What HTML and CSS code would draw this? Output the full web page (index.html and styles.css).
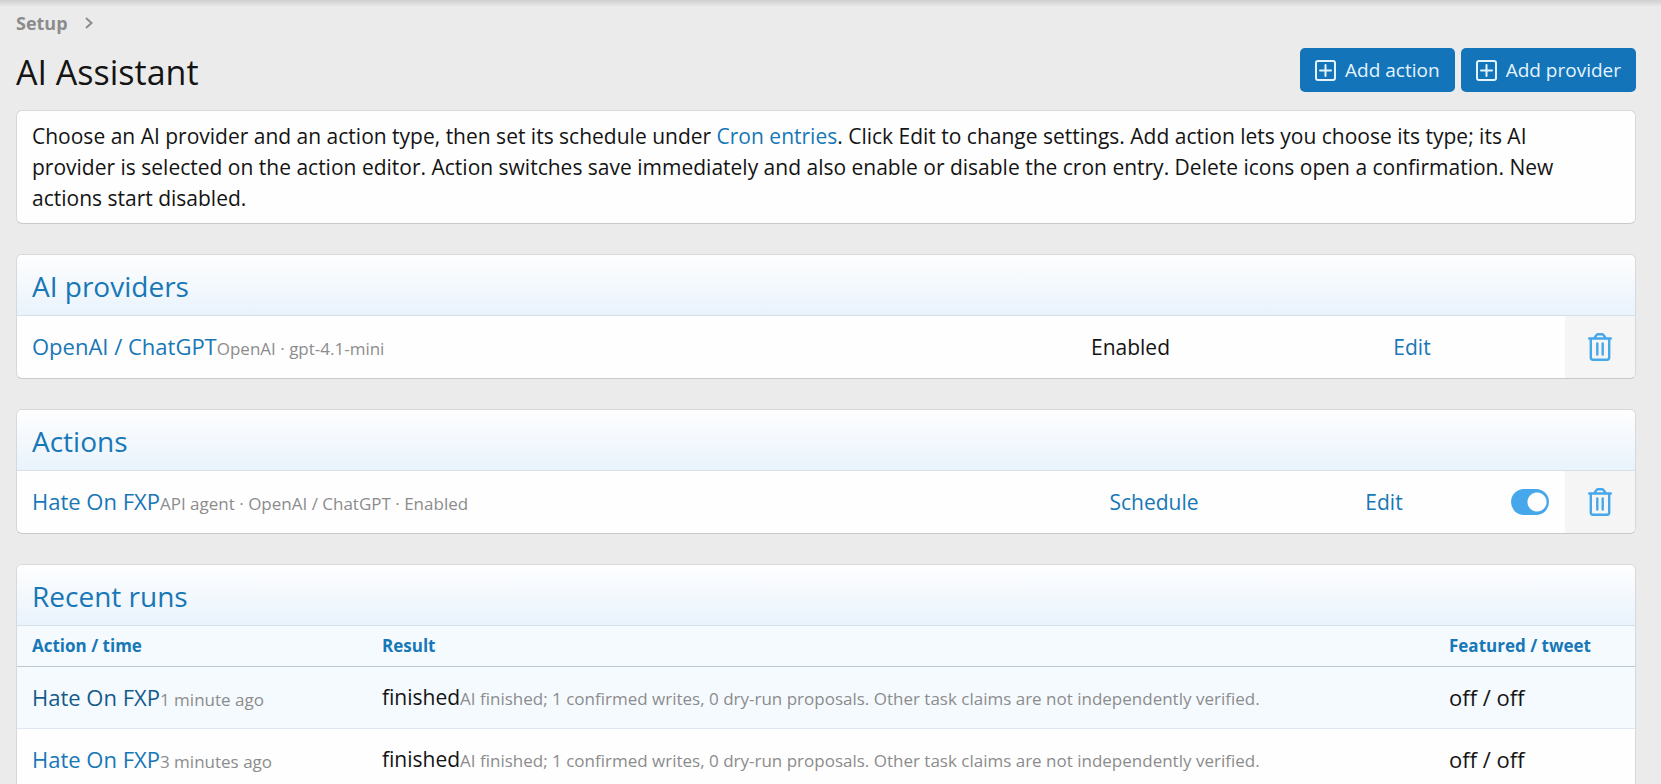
FILE: index.html
```
<!DOCTYPE html>
<html lang="en">
<head>
  <meta charset="UTF-8" />
  <meta name="viewport" content="width=device-width, initial-scale=1" />
  <title>AI Assistant</title>
  <link rel="stylesheet" href="styles.css">
</head>
<body>
  <svg class="sprite" aria-hidden="true">
    <symbol id="icon-add" viewBox="0 0 21 21">
      <rect x="1" y="1" width="19" height="19" rx="2" fill="none" stroke="currentColor" stroke-width="2" />
      <path d="M10.5 5v11M5 10.5h11" fill="none" stroke="currentColor" stroke-width="2" stroke-linecap="round" />
    </symbol>
    <symbol id="icon-trash" viewBox="0 0 24 28">
      <path d="M1.2 5.5h21.6M6.5 5l1.7-2.7Q8.8 1.300 10 1.300h4q1.200 0 1.800 1L17.500 5M2.800 6v18.500q0 2.200 2.200 2.200h14q2.200 0 2.200-2.200V6M9.300 10.500v11M14.700 10.500v11" fill="none" stroke="currentColor" stroke-width="2.400" stroke-linecap="round" stroke-linejoin="round" />
    </symbol>
  </svg>

  <main class="page">
    <nav class="breadcrumb">
      <a href="#">Setup</a>
      <svg width="8" height="12" viewBox="0 0 8 12" aria-hidden="true"><path d="M1 1l5.500 5L1 11" fill="none" stroke="currentColor" stroke-width="2" /></svg>
    </nav>

    <header class="page-header">
      <h1>AI Assistant</h1>
      <div class="button-row">
        <button type="button" class="button"><svg width="21" height="21"><use href="#icon-add" /></svg>Add action</button>
        <button type="button" class="button"><svg width="21" height="21"><use href="#icon-add" /></svg>Add provider</button>
      </div>
    </header>

    <div class="block intro">
      Choose an AI provider and an action type, then set its schedule under <a href="#">Cron entries</a>. Click Edit to change settings. Add action lets you choose its type; its AI provider is selected on the action editor. Action switches save immediately and also enable or disable the cron entry. Delete icons open a confirmation. New actions start disabled.
    </div>

    <section class="block">
      <h2>AI providers</h2>
      <table>
        <tr>
          <td><a href="#" class="name">OpenAI / ChatGPT</a><span class="hint">OpenAI · gpt-4.1-mini</span></td>
          <td class="col-status">Enabled</td>
          <td class="col-provider-edit"><a href="#">Edit</a></td>
          <td class="col-delete"><a href="#" aria-label="Delete"><svg width="24" height="28"><use href="#icon-trash" /></svg></a></td>
        </tr>
      </table>
    </section>

    <section class="block">
      <h2>Actions</h2>
      <table>
        <tr>
          <td><a href="#" class="name">Hate On FXP</a><span class="hint">API agent · OpenAI / ChatGPT · Enabled</span></td>
          <td class="col-schedule"><a href="#">Schedule</a></td>
          <td class="col-action-edit"><a href="#">Edit</a></td>
          <td class="col-toggle"><input type="checkbox" class="switch" aria-label="Enable Hate On FXP" checked></td>
          <td class="col-delete"><a href="#" aria-label="Delete"><svg width="24" height="28"><use href="#icon-trash" /></svg></a></td>
        </tr>
      </table>
    </section>

    <section class="block">
      <h2>Recent runs</h2>
      <table class="runs">
        <thead>
          <tr>
            <th class="col-action">Action / time</th>
            <th>Result</th>
            <th class="col-featured">Featured / tweet</th>
          </tr>
        </thead>
        <tbody>
          <tr class="active">
            <td><a href="#" class="name">Hate On FXP</a><span class="hint">1 minute ago</span></td>
            <td>finished<span class="hint">AI finished; 1 confirmed writes, 0 dry-run proposals. Other task claims are not independently verified.</span></td>
            <td class="flags">off / off</td>
          </tr>
          <tr>
            <td><a href="#" class="name">Hate On FXP</a><span class="hint">3 minutes ago</span></td>
            <td>finished<span class="hint">AI finished; 1 confirmed writes, 0 dry-run proposals. Other task claims are not independently verified.</span></td>
            <td class="flags">off / off</td>
          </tr>
        </tbody>
      </table>
    </section>
  </main>
</body>
</html>
```
FILE: styles.css
```
* {
  margin: 0;
  padding: 0;
  box-sizing: border-box;
}

html {
  overflow: hidden;
}

body {
  background: #ebebeb linear-gradient(#cfcfcf, #ebebeb) no-repeat top / 100% 7px;
  color: #141414;
  font-family: "Segoe UI", "Open Sans", "Noto Sans", sans-serif;
  font-size: 21px;
  line-height: 31px;
}

a {
  color: #1777b7;
  text-decoration: none;
}

.sprite {
  display: none;
}

.page {
  padding: 10px 25px 0 16px;
}

.breadcrumb {
  display: flex;
  align-items: center;
  gap: 17px;
  color: #8c8c8c;
  font-size: 18px;
  font-weight: 700;
  line-height: 26px;
}

.breadcrumb a {
  color: inherit;
}

.page-header {
  display: flex;
  align-items: center;
  justify-content: space-between;
  margin: 12px 0 18px;
}

h1 {
  padding-top: 4px;
  font-size: 34px;
  font-weight: 400;
  line-height: 40px;
}

.button-row {
  display: flex;
  gap: 6px;
}

.button {
  display: flex;
  align-items: center;
  gap: 9px;
  height: 44px;
  padding: 0 15px;
  background: #1474ba;
  border: none;
  border-radius: 5px;
  color: #e3f4ff;
  font-family: inherit;
  font-size: 19px;
  cursor: pointer;
}

.block {
  margin-bottom: 30px;
  overflow: hidden;
  background: #fefefe;
  border: 1px solid #d8d8d8;
  border-bottom-color: #c7c9cb;
  border-radius: 6px;
}

.intro {
  padding: 10px 30px 9px 15px;
}

h2 {
  padding: 12px 15px 10px;
  background: linear-gradient(#fefefe, #e9f3fc);
  border-bottom: 1px solid #d8dfe5;
  color: #1777b7;
  font-size: 28px;
  font-weight: 400;
  line-height: 38px;
}

table {
  width: 100%;
  border-collapse: collapse;
  table-layout: fixed;
}

td {
  height: 62px;
  padding: 0 15px;
  white-space: nowrap;
}

.name,
.flags {
  font-size: 22px;
}

.hint {
  color: #8c8c8c;
  font-size: 17px;
  line-height: 1;
}

.col-status {
  width: 183px;
}

.col-provider-edit {
  width: 306px;
  text-align: center;
}

.col-schedule {
  width: 238px;
  text-align: center;
}

.col-action-edit {
  width: 222px;
  text-align: center;
}

.col-toggle {
  width: 70px;
}

.col-delete {
  width: 70px;
  background: #f5f5f5;
  text-align: center;
}

.col-delete a {
  color: #47a7eb;
}

.col-delete svg,
.switch {
  display: block;
  margin: 0 auto;
}

.switch {
  width: 38px;
  height: 26px;
  appearance: none;
  background: radial-gradient(circle at 26px 13px, #fefefe 9px, #47a7eb 10px);
  border-radius: 13px;
  cursor: pointer;
}

.runs th {
  padding: 5px 15px;
  background: #f5faff;
  border-bottom: 1px solid #bcc8d2;
  color: #1777b7;
  font-size: 17px;
  line-height: 30px;
  text-align: left;
}

.runs .col-action {
  width: 350px;
}

.runs .col-featured {
  width: 201px;
}

.runs td {
  border-bottom: 1px solid #dfe6ed;
}

.runs .active {
  background: #f5faff;
}

.runs .active a {
  color: #145a8a;
}
```
